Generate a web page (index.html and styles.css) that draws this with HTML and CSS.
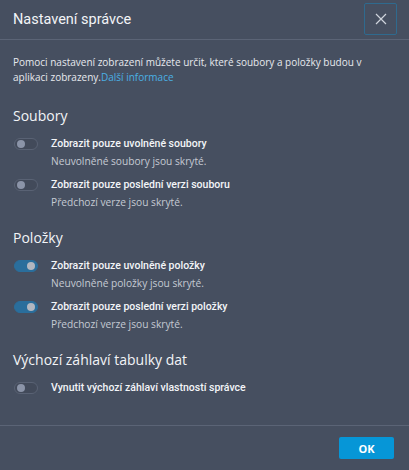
FILE: index.html
```html
<!DOCTYPE html>
<html lang="cs">
<head>
<meta charset="utf-8">
<link rel="stylesheet" href="styles.css">
</head>
<body>
<div class="dialog">
  <div class="header">
    <div class="title">Nastavení správce</div>
    <button class="close" aria-label="Zavřít">
      <svg width="12" height="12" viewBox="0 0 12 12"><path d="M1 1L11 11M11 1L1 11" stroke="#cfd4dc" stroke-width="1.2" fill="none"/></svg>
    </button>
  </div>
  <div class="body">
    <p class="desc">Pomoci nastavení zobrazení můžete určit, které soubory a položky budou v aplikaci zobrazeny.<a class="link" href="#">Další informace</a></p>

    <h2 class="section">Soubory</h2>
    <div class="row">
      <span class="toggle"><span class="knob"></span></span>
      <div class="texts"><div class="label">Zobrazit pouze uvolněné soubory</div><div class="sub">Neuvolněné soubory jsou skryté.</div></div>
    </div>
    <div class="row">
      <span class="toggle"><span class="knob"></span></span>
      <div class="texts"><div class="label">Zobrazit pouze poslední verzi souboru</div><div class="sub">Předchozí verze jsou skryté.</div></div>
    </div>

    <h2 class="section">Položky</h2>
    <div class="row">
      <span class="toggle on"><span class="knob"></span></span>
      <div class="texts"><div class="label">Zobrazit pouze uvolněné položky</div><div class="sub">Neuvolněné položky jsou skryté.</div></div>
    </div>
    <div class="row">
      <span class="toggle on"><span class="knob"></span></span>
      <div class="texts"><div class="label">Zobrazit pouze poslední verzi položky</div><div class="sub">Předchozí verze jsou skryté.</div></div>
    </div>

    <h2 class="section">Výchozí záhlaví tabulky dat</h2>
    <div class="row">
      <span class="toggle"><span class="knob"></span></span>
      <div class="texts"><div class="label">Vynutit výchozí záhlaví vlastností správce</div></div>
    </div>
  </div>
  <div class="footer">
    <button class="ok">OK</button>
  </div>
</div>
</body>
</html>
```
FILE: styles.css
```css
* { box-sizing: border-box; }
html, body { margin: 0; padding: 0; }
body {
  width: 409px;
  height: 470px;
  background: #464f60;
  font-family: "Open Sans", "Noto Sans", sans-serif;
  color: #eef0f3;
  overflow: hidden;
}
.dialog {
  display: flex;
  flex-direction: column;
  height: 470px;
}
.header {
  height: 40px;
  display: flex;
  align-items: center;
  justify-content: space-between;
  padding: 0 12px 0 13px;
  border-bottom: 1px solid #5b6476;
}
.title {
  font-family: Roboto, "Open Sans", sans-serif;
  font-size: 14.5px;
  color: #f2f4f7;
}
.close {
  width: 33px;
  height: 32px;
  margin-top: -1px;
  background: transparent;
  border: 1px solid #2f6a8e;
  border-radius: 2px;
  display: flex;
  align-items: center;
  justify-content: center;
  padding: 0;
}
.body {
  flex: 1;
  padding: 15px 13px 0 13px;
  border-bottom: 1px solid #5b6476;
}
.desc {
  margin: 0;
  font-size: 10px;
  line-height: 15px;
  color: #e6e9ee;
}
.link { color: #4ab0e4; text-decoration: none; }
.section {
  margin: 22px 0 11px;
  font-size: 14px;
  font-weight: 400;
  line-height: 18px;
  color: #f2f4f7;
}
.row + .section { margin-top: 18px; }
.row {
  display: flex;
  align-items: flex-start;
  gap: 13px;
  margin-bottom: 7px;
}
.toggle {
  width: 24px;
  height: 12px;
  margin: 2px 0 0 1px;
  border-radius: 6px;
  border: 1px solid #596274;
  background: #424a5a;
  position: relative;
  flex: none;
}
.knob {
  position: absolute;
  top: 1px;
  left: 2px;
  width: 8px;
  height: 8px;
  border-radius: 50%;
  background: #8b94a8;
}
.toggle.on { background: #2a6e9c; border-color: #2a6e9c; }
.toggle.on .knob { left: auto; right: 2px; background: #b2b7c0; }
.texts { display: flex; flex-direction: column; }
.label {
  font-family: Roboto, "Open Sans", sans-serif;
  font-size: 10.5px;
  font-weight: 500;
  line-height: 16px;
  color: #f3f5f8;
}
.sub {
  font-size: 10.2px;
  line-height: 18px;
  color: #c5cad3;
}
.footer {
  height: 44px;
  display: flex;
  align-items: center;
  justify-content: flex-end;
  padding: 0 15px 0 0;
}
.ok {
  width: 55px;
  height: 22px;
  background: #0696d7;
  border: none;
  border-radius: 2px;
  color: #fff;
  font-family: "Open Sans", sans-serif;
  font-weight: 700;
  font-size: 11px;
  padding: 0;
}
```
